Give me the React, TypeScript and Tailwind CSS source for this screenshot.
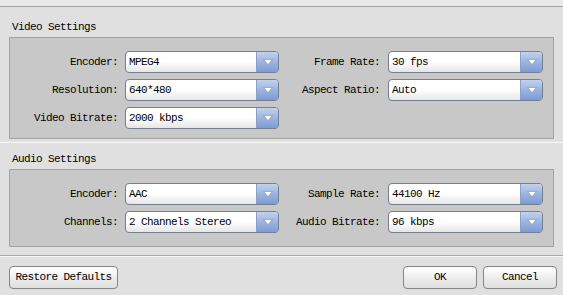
import React from 'react';

const font = { fontFamily: '"Liberation Mono", "Courier New", monospace' };

function Combo({ value, w }: { value: string; w: string }) {
  return (
    <div
      className={`${w} h-[22px] flex rounded-[4px] border border-[#74808f] bg-gradient-to-b from-white via-white to-[#e6e6e6] overflow-hidden`}
    >
      <div className="flex-1 flex items-center pl-[3px] text-[11px] tracking-[-0.6px] text-black">{value}</div>
      <div className="w-[22px] flex items-center justify-center border-l border-[#8aa0c6] bg-gradient-to-b from-[#c2d2ee] via-[#9cb4e0] to-[#7d9bd2]">
        <svg width="10" height="6" viewBox="0 0 10 6">
          <path d="M0.5 0.5 L9.5 0.5 L5 5.5 Z" fill="#ffffff" stroke="#6f8cc2" strokeWidth="0.6" />
        </svg>
      </div>
    </div>
  );
}

function Row({ l1, v1, l2, v2 }: { l1: string; v1: string; l2?: string; v2?: string }) {
  return (
    <div className="flex items-center h-[22px]">
      <div className="w-[108px] text-right text-[11px] tracking-[-0.6px]">{l1}</div>
      <div className="ml-[7px]">
        <Combo value={v1} w="w-[154px]" />
      </div>
      {l2 && (
        <>
          <div className="w-[101px] text-right text-[11px] tracking-[-0.6px]">{l2}</div>
          <div className="ml-[8px]">
            <Combo value={v2 || ''} w="w-[155px]" />
          </div>
        </>
      )}
    </div>
  );
}

function Btn({ label, w }: { label: string; w: string }) {
  return (
    <div
      className={`${w} h-[23px] flex items-center justify-center rounded-[4px] border border-[#858585] bg-gradient-to-b from-white to-[#dedede] text-[11px] tracking-[-0.6px]`}
    >
      {label}
    </div>
  );
}

export default function App() {
  return (
    <div className="w-[563px] h-[295px] bg-[#e0e0e0] text-black flex flex-col overflow-hidden" style={font}>
      <div className="h-[7px] bg-[#e9e9e9] border-b border-[#a4a4a4]" />
      <div className="h-[30px] pl-[12px] pt-[12px] text-[11px] tracking-[-0.6px]">Video Settings</div>
      <div className="ml-[9px] w-[545px] h-[102px] border border-[#a3a3a3] bg-[#c8c8c8] pt-[13px] flex flex-col gap-[6px]">
        <Row l1="Encoder:" v1="MPEG4" l2="Frame Rate:" v2="30 fps" />
        <Row l1="Resolution:" v1="640*480" l2="Aspect Ratio:" v2="Auto" />
        <Row l1="Video Bitrate:" v1="2000 kbps" />
      </div>
      <div className="h-[3px]" />
      <div className="h-[1px] bg-[#f8f8f8]" />
      <div className="h-[26px] pl-[12px] pt-[8px] text-[11px] tracking-[-0.6px]">Audio Settings</div>
      <div className="ml-[9px] w-[545px] h-[78px] border border-[#a3a3a3] bg-[#c8c8c8] pt-[13px] flex flex-col gap-[6px]">
        <Row l1="Encoder:" v1="AAC" l2="Sample Rate:" v2="44100 Hz" />
        <Row l1="Channels:" v1="2 Channels Stereo" l2="Audio Bitrate:" v2="96 kbps" />
      </div>
      <div className="h-[8px]" />
      <div className="h-[1px] bg-[#a8a8a8]" />
      <div className="h-[1px] bg-[#f6f6f6]" />
      <div className="flex items-center pl-[9px] pr-[6px] mt-[9px]">
        <Btn label="Restore Defaults" w="w-[109px]" />
        <div className="flex-1" />
        <Btn label="OK" w="w-[74px]" />
        <div className="w-[6px]" />
        <Btn label="Cancel" w="w-[74px]" />
      </div>
    </div>
  );
}
